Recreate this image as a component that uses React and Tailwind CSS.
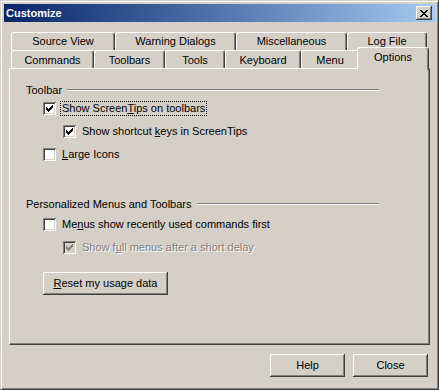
import React from "react";

const CHECK_TOPS = [5, 6, 7, 6, 5, 4, 3];

function CheckBox({ checked, disabled }) {
  return (
    <div
      className={`relative w-[13px] h-[13px] shrink-0 ${
        disabled ? "bg-[#d4d0c8]" : "bg-white"
      } shadow-[inset_1px_1px_#808080,inset_-1px_-1px_#ffffff,inset_2px_2px_#404040,inset_-2px_-2px_#d4d0c8]`}
    >
      {checked && (
        <svg width="13" height="13" className="absolute left-0 top-0" shapeRendering="crispEdges">
          {CHECK_TOPS.map((t, i) => (
            <rect key={i} x={3 + i} y={t} width="1" height="3" fill={disabled ? "#808080" : "#000"} />
          ))}
        </svg>
      )}
    </div>
  );
}

const X_ROWS = [
  [0, 1, 6, 7],
  [1, 2, 5, 6],
  [2, 3, 4, 5],
  [3, 4],
  [2, 3, 4, 5],
  [1, 2, 5, 6],
  [0, 1, 6, 7],
];

function CloseGlyph() {
  return (
    <svg width="8" height="7" shapeRendering="crispEdges">
      {X_ROWS.map((row, y) =>
        row.map((x) => <rect key={`${x}-${y}`} x={x} y={y} width="1" height="1" fill="#000" />)
      )}
    </svg>
  );
}

const tabBase =
  "flex items-center justify-center h-full bg-[#d4d0c8] border-l border-t border-r border-l-white border-t-white border-r-[#404040] rounded-t-[3px] shadow-[inset_-1px_0_#808080]";

const btnBase =
  "flex items-center justify-center bg-[#d4d0c8] shadow-[inset_-1px_-1px_#404040,inset_1px_1px_#ffffff,inset_-2px_-2px_#808080,inset_2px_2px_#d4d0c8]";

function GroupHeader({ children }) {
  return (
    <div className="flex items-center h-[14px] pl-[16px] pr-[50px]">
      <span className="leading-[14px] whitespace-nowrap">{children}</span>
      <div className="flex-1 ml-[5px] h-[2px] border-t border-t-[#808080] border-b border-b-white" />
    </div>
  );
}

export default function App() {
  return (
    <div className="w-[439px] h-[390px] flex flex-col bg-[#d4d0c8] border border-t-[#d4d0c8] border-l-[#d4d0c8] border-r-[#404040] border-b-[#404040] shadow-[inset_1px_1px_#ffffff,inset_-1px_-1px_#808080] font-['Liberation_Sans',Arial,sans-serif] text-[11px] text-black select-none">
      {/* Title bar */}
      <div className="mx-[3px] mt-[3px] h-[18px] flex items-center justify-between pl-[2px] pr-[3px] bg-gradient-to-r from-[#0a246a] to-[#a6caf0]">
        <span className="text-white font-bold text-[11px] leading-[18px]">Customize</span>
        <div className={`${btnBase} w-[16px] h-[14px]`}>
          <CloseGlyph />
        </div>
      </div>

      <div className="flex flex-col px-[8px] pt-[10px]">
        {/* Tabs back row */}
        <div className="flex h-[18px] pl-[2px]">
          <div className={`${tabBase} w-[104px]`}>Source View</div>
          <div className={`${tabBase} w-[121px]`}>Warning Dialogs</div>
          <div className={`${tabBase} w-[111px]`}>Miscellaneous</div>
          <div className={`${tabBase} w-[80px]`}>Log File</div>
        </div>
        {/* Tabs front row */}
        <div className="flex h-[18px] pl-[2px] items-end">
          <div className={`${tabBase} w-[83px] pt-[1px]`}>Commands</div>
          <div className={`${tabBase} w-[71px] pt-[1px]`}>Toolbars</div>
          <div className={`${tabBase} w-[60px] pt-[1px]`}>Tools</div>
          <div className={`${tabBase} w-[76px] pt-[1px]`}>Keyboard</div>
          <div className={`${tabBase} w-[58px] pt-[1px]`}>Menu</div>
          <div className="relative z-10 flex items-center justify-center w-[72px] h-[23px] -mb-[2px] -ml-[2px] pb-[3px] bg-[#d4d0c8] border-l border-t border-r border-l-white border-t-white border-r-[#404040] rounded-t-[3px] shadow-[inset_-1px_0_#808080]">
            Options
          </div>
        </div>

        {/* Panel */}
        <div className="h-[277px] flex flex-col border border-t-white border-l-white border-r-[#404040] border-b-[#404040] shadow-[inset_-1px_-1px_#808080]">
          <div className="mt-[14px]">
            <GroupHeader>Toolbar</GroupHeader>
          </div>

          <div className="flex items-center h-[13px] pl-[33px] mt-[5px]">
            <CheckBox checked />
            <span className="ml-[4px] px-[1px] leading-[13px] border border-dotted border-black whitespace-nowrap">
              Show Screen<u>T</u>ips on toolbars
            </span>
          </div>

          <div className="flex items-center h-[13px] pl-[53px] mt-[10px]">
            <CheckBox checked />
            <span className="ml-[4px] px-[1px] leading-[13px] border border-transparent whitespace-nowrap">
              Show shortcut <u>k</u>eys in ScreenTips
            </span>
          </div>

          <div className="flex items-center h-[13px] pl-[33px] mt-[10px]">
            <CheckBox />
            <span className="ml-[4px] px-[1px] leading-[13px] border border-transparent whitespace-nowrap">
              <u>L</u>arge Icons
            </span>
          </div>

          <div className="mt-[36px]">
            <GroupHeader>Personalized Menus and Toolbars</GroupHeader>
          </div>

          <div className="flex items-center h-[13px] pl-[33px] mt-[7px]">
            <CheckBox />
            <span className="ml-[4px] px-[1px] leading-[13px] border border-transparent whitespace-nowrap">
              Me<u>n</u>us show recently used commands first
            </span>
          </div>

          <div className="flex items-center h-[13px] pl-[53px] mt-[10px]">
            <CheckBox checked disabled />
            <span className="ml-[4px] px-[1px] leading-[13px] border border-transparent whitespace-nowrap text-[#808080] [text-shadow:1px_1px_0_#ffffff]">
              Show f<u>u</u>ll menus after a short delay
            </span>
          </div>

          <div className="pl-[33px] mt-[18px]">
            <div className={`${btnBase} w-[125px] h-[23px]`}>
              <span>
                <u>R</u>eset my usage data
              </span>
            </div>
          </div>
        </div>

        {/* Bottom buttons */}
        <div className="flex justify-end gap-[8px] mt-[9px] pr-[2px]">
          <div className={`${btnBase} w-[75px] h-[23px]`}>Help</div>
          <div className={`${btnBase} w-[75px] h-[23px]`}>Close</div>
        </div>
      </div>
    </div>
  );
}
